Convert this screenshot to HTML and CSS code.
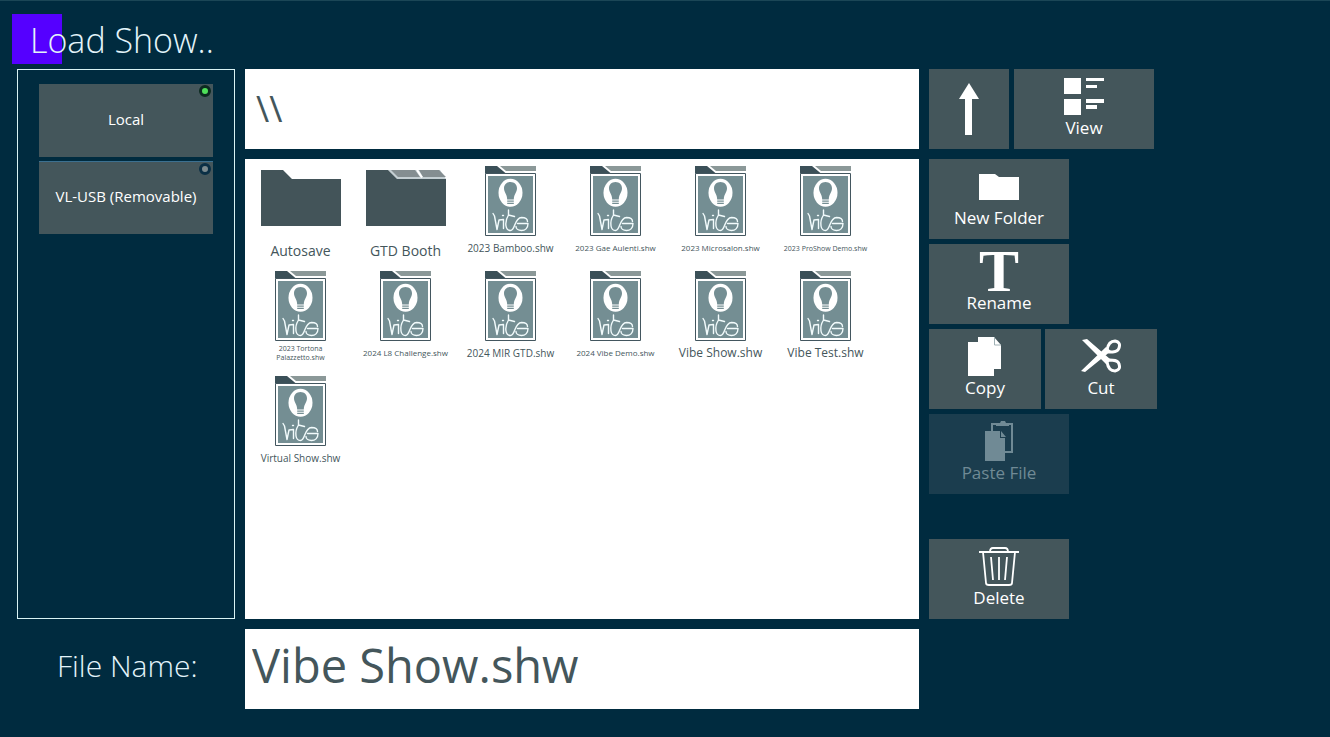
FILE: index.html
```html
<!DOCTYPE html>
<html lang="en">
<head>
<meta charset="utf-8">
<title>Load Show</title>
<link rel="stylesheet" href="styles.css">
</head>
<body>
<svg class="sprite" aria-hidden="true">
  <symbol id="show-file" viewBox="0 0 51 70">
    <path fill="#3b5058" d="M0 0h12l9 7.500H0z"/>
    <path fill="#8b9898" d="M15 0h36v5H21z"/>
    <path fill="#fff" stroke="#43565f" d="M.5 7.500h50v62H.5z"/>
    <path fill="#748e93" d="M3 10h45v57H3z"/>
    <ellipse cx="25.500" cy="26.800" rx="12" ry="14" fill="#fff"/>
    <path fill="#748e93" d="M25.500 16c-4 0-6.500 2.800-6.500 6.300 0 4 3.200 6 3.200 11.200h6.600c0-5.200 3.200-7.200 3.200-11.200 0-3.500-2.500-6.300-6.500-6.300z"/>
    <path stroke="#748e93" stroke-width="1.200" d="M22.200 35.200h6.600M22.200 37.300h6.600"/>
    <g fill="none" stroke="#f2fbfc" stroke-width="1.400" stroke-linecap="round" stroke-linejoin="round">
      <path d="M8 47.500l1.500 2.500 2.500 13.500 2-9.500 4.500-.5v9"/>
      <path d="M17.500 49.500h1"/>
      <path d="M23.500 44v5l6 1.500M23.500 49c-2.500 4-3 8-2.500 11 .5 3 2 4.500 4.500 4.500 5 0 3.500-12.500 11-13 3.500 0 6 1.500 6 4"/>
      <path d="M32.500 57.500H43c0 4.500-3 7-6.500 7s-5.500-2-5.500-4"/>
    </g>
  </symbol>
</svg>

<header class="header">
  <h1 class="title">Load Show..</h1>
</header>

<main class="dialog">
  <nav class="drives" aria-label="Drives">
    <button class="drive" type="button">Local<span class="led led-on"></span></button>
    <button class="drive drive-usb" type="button">VL-USB (Removable)<span class="led"></span></button>
  </nav>

  <input class="field path" type="text" aria-label="Path" value="\\">

  <section class="files" aria-label="Files">
    <button class="item folder" type="button">
      <svg class="folder-icon" viewBox="0 0 80 56"><path fill="#435459" d="M0 0h22l9 9h49v47H0z"/></svg>
      <span class="name">Autosave</span>
    </button>
    <button class="item folder" type="button">
      <svg class="folder-icon" viewBox="0 0 80 56"><path fill="#c3ced2" d="M22 0h52l6 9H30z"/><path fill="#435459" d="M0 0h22l9 9h49v47H0z"/><path fill="#848e91" d="M25 0h24l5 7H32zM53 0h20l7 7H57z"/><path stroke="#fff" stroke-width="2" d="M51 0l5 7.500"/></svg>
      <span class="name">GTD Booth</span>
    </button>
    <button class="item" type="button"><svg class="file-icon"><use href="#show-file"/></svg><span class="name medium">2023 Bamboo.shw</span></button>
    <button class="item" type="button"><svg class="file-icon"><use href="#show-file"/></svg><span class="name small">2023 Gae Aulenti.shw</span></button>
    <button class="item" type="button"><svg class="file-icon"><use href="#show-file"/></svg><span class="name small">2023 Microsalon.shw</span></button>
    <button class="item" type="button"><svg class="file-icon"><use href="#show-file"/></svg><span class="name tiny">2023 ProShow Demo.shw</span></button>
    <button class="item" type="button"><svg class="file-icon"><use href="#show-file"/></svg><span class="name tiny">2023 Tortona<br>Palazzetto.shw</span></button>
    <button class="item" type="button"><svg class="file-icon"><use href="#show-file"/></svg><span class="name small">2024 L8 Challenge.shw</span></button>
    <button class="item" type="button"><svg class="file-icon"><use href="#show-file"/></svg><span class="name medium">2024 MIR GTD.shw</span></button>
    <button class="item" type="button"><svg class="file-icon"><use href="#show-file"/></svg><span class="name small">2024 Vibe Demo.shw</span></button>
    <button class="item" type="button"><svg class="file-icon"><use href="#show-file"/></svg><span class="name large">Vibe Show.shw</span></button>
    <button class="item" type="button"><svg class="file-icon"><use href="#show-file"/></svg><span class="name large">Vibe Test.shw</span></button>
    <button class="item" type="button"><svg class="file-icon"><use href="#show-file"/></svg><span class="name medium">Virtual Show.shw</span></button>
  </section>

  <div class="actions">
    <div class="row row-top">
      <button class="action up" type="button" aria-label="Up one level">
        <svg width="20" height="52" viewBox="0 0 20 52"><path fill="#fff" d="M10 0l10 16h-7v36H6V16H0z"/></svg>
      </button>
      <button class="action" type="button">
        <svg width="40" height="40" viewBox="0 0 40 40"><path fill="#fff" d="M0 2h17v16H0zM0 23h17v16H0zM22 2h18v3H22zM22 9h11v3H22zM22 23h18v4H22zM22 29h11v4H22z"/></svg>
        View
      </button>
    </div>
    <button class="action" type="button">
      <svg width="40" height="40" viewBox="0 0 40 40"><path fill="#fff" d="M0 8h16l4 3h20v23H0z"/></svg>
      New Folder
    </button>
    <button class="action" type="button">
      <svg class="rename-icon" width="40" height="40" viewBox="0 0 40 40" aria-hidden="true"><text class="type-icon" x="20" y="40" text-anchor="middle">T</text></svg>
      Rename
    </button>
    <div class="row row-pair">
      <button class="action half" type="button">
        <svg width="34" height="40" viewBox="0 0 34 40"><path fill="#fff" d="M10 1h16l7 8v24h-7v7H0V6h10z"/><path fill="none" stroke="#9fb0b4" d="M26.500 1v8H33"/></svg>
        Copy
      </button>
      <button class="action half" type="button">
        <svg width="40" height="40" viewBox="0 0 40 40"><path fill="#fff" d="M1 4l5-1 23 20-4 5zM0 35l25-24 5 4L4 36z"/><g fill="none" stroke="#fff" stroke-width="3"><path d="M26 14c1-6 3-9 8-9 5 1 5 4 4 7-1 4-6 4-10 4zM26 26c1 6 3 9 8 9 5-1 5-4 4-7-1-4-6-4-10-4z"/></g></svg>
        Cut
      </button>
    </div>
    <button class="action" type="button" disabled>
      <svg width="28" height="40" viewBox="0 0 28 40"><path fill="none" stroke="#708a95" stroke-width="2" d="M7 10V3h20v28h-7"/><path fill="#708a95" d="M11 2h4l1-2h4l1 2h3v3H11zM0 10h15v7h5v23H0zM16 10l5 6h-5z"/></svg>
      Paste File
    </button>
    <button class="action delete" type="button">
      <svg width="40" height="40" viewBox="0 0 40 40"><g fill="none" stroke="#fff" stroke-width="1.800"><path d="M0 6h40M11 6c0-3 1-4 3-4h12c2 0 3 1 3 4M4 6l3 31c0 1 1 2 3 2h20c2 0 3-1 3-2l3-31M12 11l2 23M20 11v23M28 11l-2 23"/></g></svg>
      Delete
    </button>
  </div>

  <label class="file-label" for="file-name">File Name:</label>
  <input class="field file-name" id="file-name" type="text" value="Vibe Show.shw">
</main>
</body>
</html>
```

FILE: styles.css
```css
* {
  box-sizing: border-box;
}

body {
  margin: 0;
  min-height: 100vh;
  display: flex;
  flex-direction: column;
  border-top: 1px solid #1b4656;
  background: #002b3f;
  color: #fff;
  font-family: "Open Sans", "Noto Sans", sans-serif;
}

button,
input {
  border: 0;
  border-radius: 0;
  font-family: inherit;
}

.sprite {
  position: absolute;
  width: 0;
  height: 0;
}

.header {
  padding: 13px 12px 3px;
}

.title {
  margin: 0;
  padding-left: 18px;
  background: linear-gradient(#5500ff, #5500ff) 0 0 / 50px 50px no-repeat;
  font-size: 34px;
  font-weight: 300;
  line-height: 52px;
  color: #e3f4fa;
}

.dialog {
  flex: 1;
  display: grid;
  grid-template-columns: 218px minmax(0, 1fr) 401px;
  grid-template-rows: 80px minmax(460px, 1fr) 80px;
  gap: 10px;
  padding: 0 0 28px 17px;
}

.drives {
  grid-row: 1 / 3;
  display: flex;
  flex-direction: column;
  gap: 4px;
  padding: 14px 21px;
  border: 1px solid #d9f3f4;
}

.drive {
  position: relative;
  height: 73px;
  padding: 0 0 4px;
  background: #44565b;
  color: #fff;
  font-size: 15px;
}

.drive-usb {
  border-top: 1px solid #3c7090;
}

.led {
  position: absolute;
  top: 1px;
  right: 2px;
  width: 12px;
  height: 12px;
  border: 3px solid #0a2f45;
  border-radius: 50%;
  background: #7c8a8e;
}

.led-on {
  border-color: #0c2a20;
  background: #4fe05a;
}

.field {
  width: 100%;
  background: #fff;
  color: #44565b;
}

.path {
  padding: 0 11px 2px;
  font-size: 36px;
}

.files {
  grid-column: 2;
  grid-row: 2;
  display: grid;
  grid-template-columns: repeat(auto-fill, 105px);
  grid-auto-rows: 105px;
  align-content: start;
  padding: 5px 3px;
  background: #fff;
}

.item {
  display: flex;
  flex-direction: column;
  align-items: center;
  padding: 2px 0 0;
  background: none;
  color: #44565b;
}

.item.folder {
  padding-top: 6px;
}

.file-icon {
  flex: none;
  width: 51px;
  height: 70px;
}

.folder-icon {
  flex: none;
  width: 80px;
  height: 56px;
  margin-bottom: 13px;
}

.name {
  display: flex;
  align-items: center;
  min-height: 24px;
  font-size: 14px;
  line-height: 24px;
}

.large {
  font-size: 12px;
}

.medium {
  font-size: 10px;
}

.small {
  font-size: 8px;
}

.tiny {
  font-size: 7px;
  line-height: 9px;
}

.actions {
  grid-column: 3;
  grid-row: 1 / 3;
  display: flex;
  flex-direction: column;
  align-items: flex-start;
  gap: 5px;
}

.row {
  display: flex;
  gap: 5px;
}

.row-top {
  margin-bottom: 5px;
}

.row-pair {
  gap: 4px;
}

.action {
  display: flex;
  flex-direction: column;
  align-items: center;
  justify-content: flex-end;
  width: 140px;
  height: 80px;
  padding: 0 0 9px;
  background: #44565b;
  color: #fff;
  font-size: 17px;
  line-height: 24px;
}

.action:disabled {
  background: #1b3d4e;
  color: #708a95;
}

.up {
  width: 80px;
  padding-bottom: 14px;
}

.half {
  width: 112px;
}

.rename-icon {
  overflow: visible;
}

.type-icon {
  fill: #fff;
  font-family: "Liberation Serif", serif;
  font-size: 60px;
  font-weight: 700;
}

.delete {
  margin-top: auto;
}

.file-label {
  grid-column: 1;
  align-self: center;
  padding: 0 0 6px 40px;
  font-size: 30px;
  font-weight: 300;
  line-height: 44px;
  color: #e3f4fa;
}

.file-name {
  padding: 0 7px 8px;
  font-size: 47px;
}
```
